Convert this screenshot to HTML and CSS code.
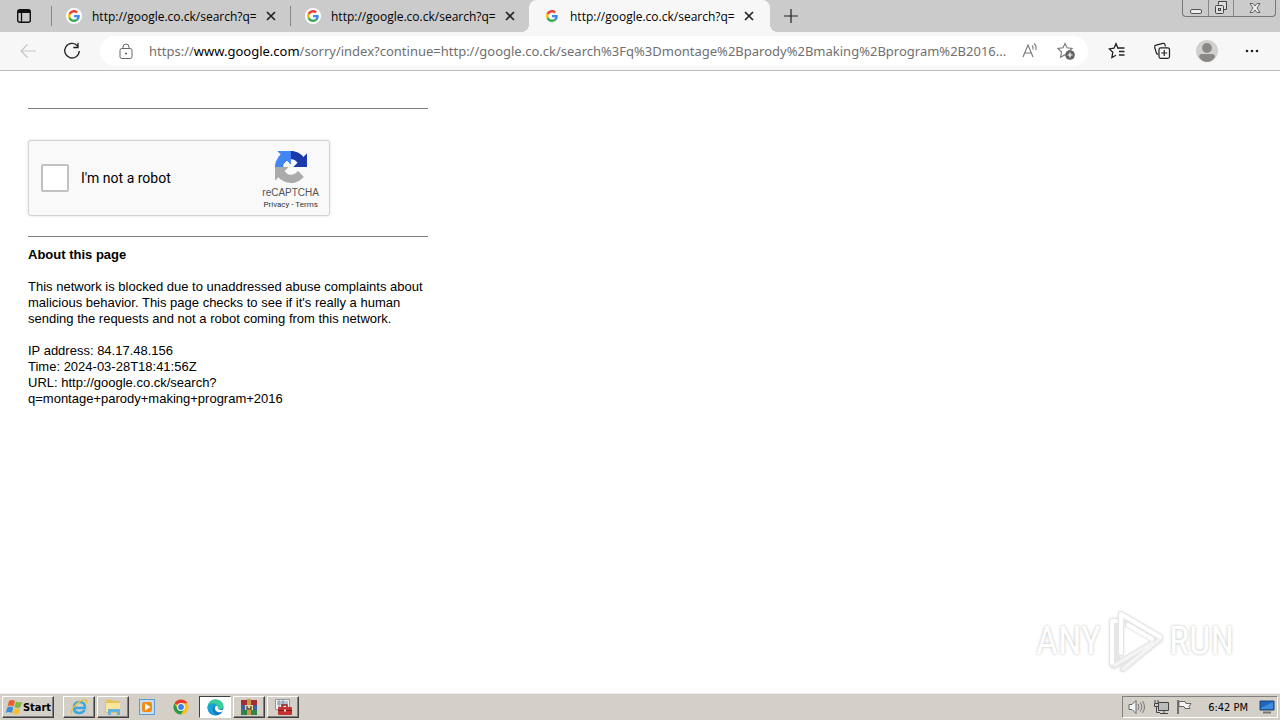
FILE: index.html
```html
<!DOCTYPE html>
<html lang="en">
<head>
<meta charset="utf-8">
<title>http://google.co.ck/search?q=montage+parody+making+program+2016</title>
<link rel="stylesheet" href="styles.css">
</head>
<body>
<svg class="defs" aria-hidden="true">
  <symbol id="google" viewBox="0 0 48 48">
    <path fill="#ea4335" d="M24 9.5c3.54 0 6.71 1.22 9.21 3.6l6.85-6.85C35.9 2.38 30.47 0 24 0 14.62 0 6.51 5.38 2.56 13.22l7.98 6.19C12.43 13.72 17.74 9.5 24 9.5z"/>
    <path fill="#4285f4" d="M46.98 24.55c0-1.57-.15-3.09-.38-4.55H24v9.02h12.94c-.58 2.96-2.26 5.48-4.78 7.18l7.73 6c4.51-4.18 7.09-10.36 7.09-17.65z"/>
    <path fill="#fbbc05" d="M10.53 28.59c-.48-1.45-.76-2.99-.76-4.59s.27-3.14.76-4.59l-7.98-6.19C.92 16.46 0 20.12 0 24c0 3.88.92 7.54 2.56 10.78l7.97-6.19z"/>
    <path fill="#34a853" d="M24 48c6.48 0 11.93-2.13 15.89-5.81l-7.73-6c-2.15 1.45-4.92 2.3-8.16 2.3-6.26 0-11.57-4.22-13.47-9.91l-7.98 6.19C6.51 42.62 14.62 48 24 48z"/>
  </symbol>
  <symbol id="cross" viewBox="0 0 10 10"><path d="M1 1l8 8M9 1L1 9" fill="none" stroke="#222" stroke-width="1.7"/></symbol>
</svg>

<header class="browser">
  <div class="tabstrip">
    <button class="tab-actions" aria-label="Tab actions menu">
      <svg width="16" height="16" viewBox="0 0 16 16"><rect x="1.7" y="1.7" width="12.6" height="12.6" rx="2" fill="none" stroke="#111" stroke-width="1.4"/><path d="M2 2h12v3H2z" fill="#111"/><path d="M5.5 4v10" stroke="#111" stroke-width="1.3"/></svg>
    </button>
    <div class="tab">
      <span class="favicon"><svg width="12" height="12"><use href="#google"/></svg></span>
      <span class="tab-title">http://google.co.ck/search?q=</span>
      <button class="tab-close" aria-label="Close tab"><svg width="10" height="10"><use href="#cross"/></svg></button>
    </div>
    <div class="tab before-active">
      <span class="favicon"><svg width="12" height="12"><use href="#google"/></svg></span>
      <span class="tab-title">http://google.co.ck/search?q=</span>
      <button class="tab-close" aria-label="Close tab"><svg width="10" height="10"><use href="#cross"/></svg></button>
    </div>
    <div class="tab active">
      <span class="favicon"><svg width="12" height="12"><use href="#google"/></svg></span>
      <span class="tab-title">http://google.co.ck/search?q=</span>
      <button class="tab-close" aria-label="Close tab"><svg width="10" height="10"><use href="#cross"/></svg></button>
    </div>
    <button class="new-tab" aria-label="New tab"><svg width="14" height="14" viewBox="0 0 14 14"><path d="M7 0v14M0 7h14" stroke="#222" stroke-width="1.2"/></svg></button>
    <div class="window-controls">
      <button class="minimize" aria-label="Minimize"><svg width="12" height="14" viewBox="0 0 12 14"><rect x=".5" y="8.500" width="11" height="4" rx="1.500" fill="#eee" stroke="#555"/></svg></button>
      <button class="restore" aria-label="Restore"><svg width="14" height="14" viewBox="0 0 14 14"><g fill="#ddd" stroke="#444"><path d="M4.500 3.500v-3h8v8h-3"/><rect x="1.500" y="4.500" width="8" height="8" rx="1"/><rect x="4.500" y="7.500" width="2" height="2"/></g></svg></button>
      <button class="close" aria-label="Close"><svg width="12" height="12" viewBox="0 0 12 12"><path d="M1 1.500h3l2 2.500 2-2.500h3L8 6l3 4.500H8L6 8l-2 2.500H1L4 6z" fill="#eee" stroke="#555" stroke-width=".9"/></svg></button>
    </div>
  </div>

  <div class="toolbar">
    <button class="nav" aria-label="Back"><svg width="18" height="16" viewBox="0 0 18 16"><path d="M8.500 1.500L2 8l6.500 6.500M2 8h15" fill="none" stroke="#c6c6c6" stroke-width="1.200"/></svg></button>
    <button class="nav" aria-label="Refresh"><svg width="18" height="18" viewBox="0 0 18 18"><path d="M14.600 4A7.300 7.300 0 1 0 16.300 9M15 .8v4.700h-4.700" fill="none" stroke="#222" stroke-width="1.300"/></svg></button>
    <div class="address">
      <svg class="lock" width="14" height="17" viewBox="0 0 14 17"><rect x="1" y="5.500" width="12" height="10" rx="1.800" fill="none" stroke="#666"/><path d="M4 5.500V4a3 3 0 0 1 6 0v1.500" fill="none" stroke="#666"/><circle cx="7" cy="10.500" r="1" fill="#555"/></svg>
      <div class="url">https://<b>www.google.com</b>/sorry/index?continue=http://google.co.ck/search%3Fq%3Dmontage%2Bparody%2Bmaking%2Bprogram%2B2016...</div>
      <button class="in-address" aria-label="Read aloud"><svg width="18" height="18" viewBox="0 0 18 18"><path d="M2 15L7 3l5 12M3.800 11h6.400M11 3.500q1.500 1.500 1 4M13 1.500q3 2.500 1.800 6.500" fill="none" stroke="#777" stroke-width="1.100"/></svg></button>
      <button class="in-address" aria-label="Add to favorites"><svg width="18" height="18" viewBox="0 0 18 18"><path d="M8 1.500l2 4.300 5 .7-3.600 3.300.9 5.200L8 12.700l-4.400 2.500.9-5.200L1 6.500l5-.7z" fill="none" stroke="#777" stroke-width="1.100"/><circle cx="13" cy="13" r="4.800" fill="#616161"/><path d="M13 10.500v5M10.500 13h5" stroke="#fff" stroke-width="1.200"/></svg></button>
    </div>
    <div class="tools">
      <button aria-label="Favorites"><svg width="18" height="18" viewBox="0 0 18 18"><path d="M10.500 6.300H10L8 1.700 6 6.200l-4.700.7 3.500 3.400-.9 5.300L8 13.200M10.500 6h6M11 9.500h5.500M11 13h5.500" fill="none" stroke="#222" stroke-width="1.300"/></svg></button>
      <button aria-label="Collections"><svg width="18" height="18" viewBox="0 0 18 18"><path d="M12.500 4.500L12 2.700Q11.600 1 10 1.400L3 3.200Q1.300 3.700 1.700 5.300L3.400 11q.4 1.400 2 1.200" fill="none" stroke="#222" stroke-width="1.200"/><rect x="6" y="5.800" width="10.500" height="10.500" rx="1.800" fill="#f7f7f7" stroke="#222" stroke-width="1.200"/><path d="M11.250 8v6M8.250 11h6" stroke="#222" stroke-width="1.200"/></svg></button>
      <button aria-label="Profile"><svg width="22" height="22" viewBox="0 0 22 22"><circle cx="11" cy="11" r="11" fill="#d2d0ce"/><circle cx="11" cy="8" r="4.900" fill="#8a8886"/><path d="M3 17q0-3 3-3h10q3 0 3 3-3 5-8 5t-8-5z" fill="#8a8886"/></svg></button>
      <button aria-label="Settings and more"><svg width="16" height="4" viewBox="0 0 16 4"><g fill="#222"><circle cx="3" cy="2" r="1.300"/><circle cx="8" cy="2" r="1.300"/><circle cx="13" cy="2" r="1.300"/></g></svg></button>
    </div>
  </div>
</header>

<main class="page">
  <div class="content">
    <hr>
    <form class="captcha">
      <label class="check"><input type="checkbox" name="robot">I'm not a robot</label>
      <div class="brand">
        <svg width="32" height="32" viewBox="0 0 64 64"><path fill="#1c3aa9" d="M64 31.955l-.033-1.370V4.687l-7.160 7.160C50.948 4.674 42.033.093 32.050.093c-10.390 0-19.622 4.960-25.474 12.649l11.736 11.860a15.550 15.550 0 0 1 4.754-5.334c2.050-1.600 4.952-2.906 8.968-2.906.485 0 .860.057 1.135.163 4.976.393 9.288 3.140 11.828 7.124l-8.307 8.307L64 31.953"/><path fill="#4285f4" d="M31.862.094l-1.370.033H4.594l7.160 7.160C4.580 13.147 0 22.060 0 32.046c0 10.390 4.960 19.622 12.650 25.474l11.860-11.736a15.550 15.550 0 0 1-5.334-4.754c-1.600-2.050-2.906-4.952-2.906-8.968 0-.485.057-.860.163-1.135.393-4.976 3.140-9.288 7.124-11.828l8.307 8.307L31.860.095"/><path fill="#ababab" d="M.001 32.045l.033 1.370v25.898l7.160-7.160c5.860 7.173 14.774 11.754 24.760 11.754 10.390 0 19.622-4.960 25.474-12.650L45.692 39.400a15.550 15.550 0 0 1-4.754 5.334c-2.050 1.600-4.952 2.906-8.968 2.906-.485 0-.860-.057-1.135-.163-4.976-.393-9.288-3.140-11.828-7.124l8.307-8.307c-10.522.040-22.400.066-27.310-.005"/></svg>
        <span class="brand-name">reCAPTCHA</span>
        <span class="legal"><a href="#">Privacy</a> - <a href="#">Terms</a></span>
      </div>
    </form>
    <hr>
    <section class="about">
      <b>About this page</b>
      <p>This network is blocked due to unaddressed abuse complaints about malicious behavior. This page checks to see if it's really a human sending the requests and not a robot coming from this network.</p>
      <p>IP address: 84.17.48.156<br>Time: 2024-03-28T18:41:56Z<br>URL: http://google.co.ck/search?<br>q=montage+parody+making+program+2016</p>
    </section>
  </div>
  <div class="watermark">
    <span>ANY</span>
    <svg width="62" height="68" viewBox="0 0 62 68"><g fill="none" stroke-linecap="round" stroke-linejoin="round"><path d="M17 46V7L56 30M23 17L49 32M8 57V14h5M56 32L19 62M49 36L10 59M13 18V50" stroke="#e6e6e6" stroke-width="6"/><path d="M17 46V7L56 30M24 18L48 32M8 56V14h4" stroke="#fff" stroke-width="4"/><path d="M56 32L19 62M48 36L11 58" stroke="#f5f5f5" stroke-width="3"/></g></svg>
    <span>RUN</span>
  </div>
</main>

<footer class="taskbar">
  <button class="start"><svg width="18" height="17" viewBox="0 0 18 17"><path d="M4 2q3-2 6 0L8.500 7.500q-3-2-6 0z" fill="#e8612c"/><path d="M11 2.500q3 2 6 0L15.500 8q-3 2-6 0z" fill="#80b83c"/><path d="M2.300 8.500q3-2 6 0L6.800 14q-3-2-6 0z" fill="#3a8bd8"/><path d="M9.200 9q3 2 6 0l-1.500 5.500q-3 2-6 0z" fill="#f6c12c"/></svg>Start</button>
  <nav class="apps">
    <button class="raised" aria-label="Internet Explorer"><svg width="18" height="18" viewBox="0 0 18 18"><path d="M4 10h11q.2-6-5.500-6Q4 4 4 9.700 4 15 9.500 15q3.500 0 5-3" fill="none" stroke="#39a7df" stroke-width="2.500"/><path d="M2 16C-1 13 8 2 15 2q3 0 1 4" fill="none" stroke="#efbd38" stroke-width="1.400"/></svg></button>
    <button class="raised" aria-label="Explorer"><svg width="18" height="18" viewBox="0 0 18 18"><path d="M1 3l2-1.500h5L9.500 3H16v12H1z" fill="#e7c35c"/><path d="M2 5h14v9H2z" fill="#fae69b"/><path d="M4 17v-6h12v6h-3v-3H7v3z" fill="#63b3df"/></svg></button>
    <button aria-label="Media Player"><svg width="18" height="18" viewBox="0 0 18 18"><rect x="1.500" y="1.500" width="15" height="15" fill="#c5def2" stroke="#5b9bd0"/><rect x="4" y="4" width="10" height="10" rx="2" fill="#f28a18"/><path d="M7 5.500v7L12.500 9z" fill="#fff"/></svg></button>
    <button aria-label="Chrome"><svg width="16" height="16" viewBox="0 0 16 16"><circle cx="8" cy="8" r="7.500" fill="#fbc116"/><path d="M8 8L1.500 4.250A7.500 7.500 0 0 1 14.500 4.250H8z" fill="#e33b2e"/><path d="M1.500 4.250A7.500 7.500 0 0 0 8 15.500L11.250 9.900 4.750 9.900z" fill="#299b48"/><circle cx="8" cy="8" r="3.900" fill="#fff"/><circle cx="8" cy="8" r="2.900" fill="#3c7de6"/></svg></button>
    <button class="pressed" aria-label="Edge"><svg width="17" height="17" viewBox="0 0 17 17"><circle cx="8.500" cy="8.500" r="8" fill="#1678c8"/><path d="M.6 8C1 3 4.500.5 8.500.5c5 0 8 3.500 8 6.500 0 3-3 4.500-6 3.500 2-3-1-5-4-5-3 0-5 1-5.900 2.500z" fill="#3ccb9a"/><path d="M.6 8C1.500 3.500 9 3 10 7c-5-1-6 5-1 8.500C4 17 0 12 .6 8z" fill="#18a2d8"/><path d="M8 8q2-2 3 0c-1 2 1 4 6 2.500-1.500 3-4.500 3-6 2.500Q7 11.500 8 8z" fill="#fff"/></svg></button>
    <button class="raised" aria-label="WinRAR"><svg width="18" height="18" viewBox="0 0 18 18"><path d="M1 2h16v5H1z" fill="#a52b34"/><path d="M1 7h16v5H1z" fill="#3b60a4"/><path d="M1 12h16v5H1z" fill="#35834a"/><path d="M7 1h4v16H7z" fill="#c79a4b"/><path d="M5 7h8v5H5z" fill="#e4d2a3"/><path d="M7 8v3h4V8" fill="none" stroke="#54401d" stroke-width="1.300"/></svg></button>
    <button class="raised" aria-label="Toolbox"><svg width="18" height="18" viewBox="0 0 18 18"><path d="M1.500 1.500h14v10h-14z" fill="#f1f1f1" stroke="#8e98a3"/><path d="M3 4h11M3 6h11M5 2v8M9 2v8" stroke="#8293a8"/><path d="M8 9V7h5v2" fill="none" stroke="#8f2020" stroke-width="1.500"/><rect x="4" y="9" width="14" height="8" rx="1" fill="#c43331"/><path d="M4 12.500h14" stroke="#761c1c"/><path d="M10 11.500h2v2h-2z" fill="#eee"/></svg></button>
  </nav>
  <div class="tray">
    <svg width="18" height="16" viewBox="0 0 18 16"><path d="M1 5.500h3l4-4v13l-4-4H1z" fill="#f4f4f4" stroke="#666"/><path d="M10 5q2 3 0 6M12.500 3.500q3 4.500 0 9M14.500 2q4 6 0 12" fill="none" stroke="#777"/></svg>
    <svg width="16" height="16" viewBox="0 0 16 16"><path d="M5.500 3.500h10v8h-10z" fill="#bbb" stroke="#444"/><path d="M7 14.500h8M11 11v3M2 1v3M5 1v3M1.500 4.500h4v3h-4zM3.500 8v5.500H7" fill="none" stroke="#444"/></svg>
    <svg width="17" height="16" viewBox="0 0 17 16"><path d="M2 1v14" stroke="#555" stroke-width="1.500"/><path d="M3 2.500h6l1 2h5l-2 3 1 2H9l-1-2H3z" fill="#f5f5f5" stroke="#666"/></svg>
    <time>6:42 PM</time>
    <svg width="16" height="14" viewBox="0 0 16 14"><path d="M1 1h14v9H1z" fill="#2166bd" stroke="#174778"/><path d="M2 8L14 2v7H2z" fill="#408bdd"/><path d="M4 12.500h8" stroke="#777" stroke-width="2"/></svg>
  </div>
</footer>
</body>
</html>
```

FILE: styles.css
```css
* { box-sizing: border-box; }
body { margin: 0; min-height: 100vh; display: flex; flex-direction: column; background: #fff; color: #000; font-family: "Liberation Sans", Arial, sans-serif; }
svg { display: block; flex: none; }
button { display: flex; align-items: center; justify-content: center; padding: 0; border: 0; background: none; color: inherit; font: inherit; }
.defs { position: absolute; width: 0; height: 0; }

.tabstrip { display: flex; height: 32px; background: #cbcbcb; font-family: "Open Sans", "Noto Sans", sans-serif; font-size: 12px; }
.tab-actions { width: 51px; padding-right: 3px; }
.tab { display: flex; align-items: center; width: 239px; padding: 0 11px 0 15px; position: relative; }
.tab:not(.active)::before { content: ""; position: absolute; left: 0; top: 6px; width: 1px; height: 20px; background: #888; }
.tab.active { background: #f7f7f7; border-radius: 8px 8px 0 0; width: 241px; padding-right: 13px; }
.tab.active::before, .tab.active::after { content: ""; position: absolute; bottom: 0; width: 8px; height: 8px; }
.tab.active::before { right: 100%; background: radial-gradient(circle at 0 0, transparent 8px, #f7f7f7 8px); }
.tab.active::after { left: 100%; background: radial-gradient(circle at 100% 0, transparent 8px, #f7f7f7 8px); }
.favicon { display: flex; align-items: center; justify-content: center; width: 16px; height: 16px; border-radius: 8px; background: #fff; flex: none; }
.active .favicon { background: none; }
.tab-title { flex: 1; margin-left: 10px; white-space: nowrap; }
.tab-close { width: 16px; height: 16px; margin-left: 2px; flex: none; }
.new-tab { width: 42px; }
.window-controls { display: flex; height: 17px; margin-left: auto; margin-right: 4px; border: 1px solid #777; border-top: 0; border-radius: 0 0 4px 4px; }
.window-controls button { width: 25px; }
.window-controls button + button { border-left: 1px solid #888; }
.window-controls .close { width: 42px; }

.toolbar { display: flex; align-items: center; height: 39px; padding-left: 6px; background: #f7f7f7; border-bottom: 1px solid #bdbdbd; }
.nav { width: 44px; height: 32px; }
.address { flex: 1; min-width: 0; display: flex; align-items: center; height: 30px; margin-left: 6px; padding: 0 4px 0 19px; border-radius: 15px; background: #fff; }
.url { flex: 1; min-width: 0; margin-left: 16px; overflow: hidden; white-space: nowrap; color: #707070; font-family: "Noto Sans", "Open Sans", sans-serif; font-size: 13px; }
.url b { color: #000; font-weight: 400; }
.in-address { width: 36px; height: 28px; }
.tools { display: flex; margin-left: 6px; padding-right: 6px; }
.tools button { width: 45px; height: 32px; }

.page { flex: 1; position: relative; padding: 37px 28px; }
.content { max-width: 400px; font-size: 13px; line-height: 16px; }
hr { height: 1px; margin: 0; border: 0; background: #808080; }
.captcha { display: flex; justify-content: space-between; width: 302px; height: 76px; margin: 31px 0 20px; padding: 0 10px 0 12px; border: 1px solid #d3d3d3; border-radius: 3px; background: #f9f9f9; box-shadow: 0 0 3px #ddd; }
.check { display: flex; align-items: center; font: 14px/17px Roboto, sans-serif; }
.check input { appearance: none; width: 28px; height: 28px; margin: 0 12px 0 0; border: 2px solid #c1c1c1; border-radius: 2px; background: #fff; }
.brand { display: flex; flex-direction: column; align-items: center; padding-top: 10px; color: #555; }
.brand-name { margin-top: 4px; font-size: 10px; line-height: 12px; }
.legal { color: #333; font-family: Roboto, sans-serif; font-size: 8px; line-height: 12px; }
a { color: inherit; text-decoration: none; }
.about { margin-top: 10px; }
.about p { margin: 16px 0 0; }
.watermark { position: absolute; right: 46px; bottom: 18px; display: flex; align-items: center; gap: 3px; color: #fff; font: 38px/68px "Liberation Sans Narrow", "Roboto Condensed", "Liberation Sans", sans-serif; text-shadow: 0 0 3px #bbb; }
.watermark svg { filter: drop-shadow(0 0 1px #ddd); }

.taskbar { display: flex; align-items: center; height: 27px; padding: 1px 2px; background: #d4d0c8; border-top: 1px solid #eee; font-family: "DejaVu Sans Condensed", "DejaVu Sans", sans-serif; font-size: 11px; }
.start, .raised { border: 1px solid; border-color: #fff #404040 #404040 #fff; box-shadow: inset -1px -1px #808080; }
.start { width: 52px; height: 22px; font-weight: 700; }
.apps { display: flex; gap: 2px; margin-left: 9px; }
.apps button { width: 32px; height: 22px; }
.apps .pressed { border: 1px solid; border-color: #404040 #fff #fff #404040; background: #fff; }
.tray { display: flex; align-items: center; gap: 7px; height: 22px; margin-left: auto; padding: 0 2px 0 5px; border: 1px solid; border-color: #808080 #fff #fff #808080; }
.tray time { margin: 0 4px 0 8px; }
```
